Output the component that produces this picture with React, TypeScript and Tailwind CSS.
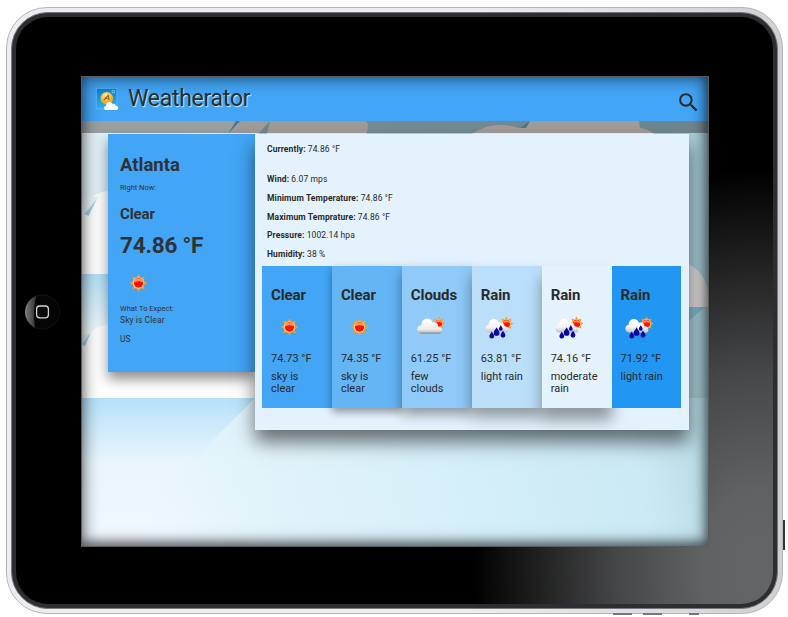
import React from "react";
import { MdSearch } from "react-icons/md";

const rays = [0, 45, 90, 135, 180, 225, 270, 315];

function SunShape({ x, y, s = 1 }: { x: number; y: number; s?: number }) {
  return (
    <g transform={`translate(${x} ${y}) scale(${s})`}>
      {rays.map((a) => (
        <path key={a} d="M-2.4 -4.6 L0 -8.8 L2.4 -4.6Z" fill="#f9a01b" transform={`rotate(${a})`} />
      ))}
      <circle r="5.5" fill="#fbd9a0" />
      <circle r="4.7" fill="#ff1200" />
      <path d="M-4.6 -.6A4.7 4.7 0 0 1 4.6 -.6Q0 -2.8 -4.6 -.6Z" fill="#ffb27a" opacity=".85" />
    </g>
  );
}

function CloudShape({ dy = 0 }: { dy?: number }) {
  return (
    <g transform={`translate(0 ${dy})`}>
      <path d="M11 28.5C5 28.5 4.5 20.5 10.5 20C10.5 12.5 20 11.5 21.5 17.5C26 16.5 27.5 20 27 21.5C32 21.5 32.5 28.5 28.5 28.5Z" fill="url(#cloudFill)" />
    </g>
  );
}

function WeatherIcon({ kind }: { kind: string }) {
  return (
    <svg className="mb-px block h-[46px] w-[42px]" viewBox="0 0 42 46">
      <defs>
        <linearGradient id="cloudFill" x1="0" y1="0" x2="0" y2="1">
          <stop offset="0" stopColor="#fff" />
          <stop offset=".72" stopColor="#ececec" />
          <stop offset=".9" stopColor="#c4c4c4" />
          <stop offset="1" stopColor="#777" />
        </linearGradient>
        <linearGradient id="rainCloudFill" x1="0" y1="0" x2="0" y2="1">
          <stop offset="0" stopColor="#fff" />
          <stop offset=".6" stopColor="#f4f4f4" />
          <stop offset="1" stopColor="#bdbdc2" />
        </linearGradient>
      </defs>
      {kind === "sun" && <SunShape x={18.5} y={22} />}
      {kind === "cloud" && (
        <>
          <SunShape x={27.7} y={18.3} s={0.75} />
          <CloudShape />
        </>
      )}
      {kind === "rain" && (
        <>
          <SunShape x={25.5} y={18.6} s={0.8} />
          <path d="M7.5 27.5C3.5 26.5 3.2 20.5 7.6 19.8C7.6 13 16.5 12 17.6 17.5C22.6 16.8 23.6 19.6 23.5 21.2C28.5 21.4 28.6 27.3 25 27.8Z" fill="url(#rainCloudFill)" />
          {[
            [10.8, 30.2, 1.05],
            [15.6, 26.8, 1.25],
            [19.8, 23.2, 0.8],
            [22, 29.4, 1.05],
          ].map(([x, y, s]) => (
            <path key={x} d="M0 -3.6C1 -1.5 2.3 -.6 2.3 .9A2.3 2.3 0 0 1 -2.3 .9C-2.3 -.6 -1 -1.5 0 -3.6Z" fill="#0808a0" transform={`translate(${x} ${y}) scale(${s})`} />
          ))}
        </>
      )}
    </svg>
  );
}

function Logo() {
  return (
    <svg className="block h-6 w-6 shrink-0" viewBox="0 0 24 24">
      <defs>
        <linearGradient id="logoBg" x1="0" y1="0" x2="0" y2="1">
          <stop offset="0" stopColor="#0a7fd6" />
          <stop offset="1" stopColor="#35b0f2" />
        </linearGradient>
        <radialGradient id="logoSun" cx=".45" cy=".3">
          <stop offset="0" stopColor="#fff3a6" />
          <stop offset="1" stopColor="#f6b21c" />
        </radialGradient>
      </defs>
      <rect x="1.3" y="1.3" width="20.6" height="20.6" fill="url(#logoBg)" stroke="#5dbdf5" strokeWidth=".8" />
      <circle cx="11.8" cy="11.2" r="6.2" fill="url(#logoSun)" />
      <path d="M8.6 13.4L13.2 8.4L14 12.8M10 11L13.8 12" stroke="#a9621f" strokeWidth="1.2" fill="none" />
      <circle cx="18.4" cy="4.6" r="1.4" fill="none" stroke="#a9dcfa" strokeWidth=".8" />
      <path d="M11 22.9C8.2 22.8 8.1 19.2 11 18.9C11 15.4 15.4 13.2 17.6 17C19.8 16.4 20.6 17.8 20.5 18.8C24 19.2 23.8 22.9 21.2 22.9Z" fill="#fff" />
    </svg>
  );
}

function Sky() {
  return (
    <svg className="absolute inset-0 h-full w-full" viewBox="82 77 626 469" preserveAspectRatio="none">
      <defs>
        <linearGradient id="base" x1="0" y1="0" x2="1" y2="0">
          <stop offset="0" stopColor="#e4f2f8" />
          <stop offset=".3" stopColor="#b5d9e4" />
          <stop offset="1" stopColor="#a9ced9" />
        </linearGradient>
        <linearGradient id="strip" x1="0" y1="0" x2="0" y2="1">
          <stop offset="0" stopColor="#b3e0f6" />
          <stop offset="1" stopColor="#f4f9fc" />
        </linearGradient>
        <linearGradient id="low" x1="0" y1="0" x2="0" y2="1">
          <stop offset="0" stopColor="#b5e1f8" />
          <stop offset=".42" stopColor="#e9f5fc" />
          <stop offset="1" stopColor="#eff8fe" />
        </linearGradient>
        <linearGradient id="beam" gradientUnits="userSpaceOnUse" x1="140" y1="500" x2="710" y2="400">
          <stop offset="0" stopColor="#e9f6fd" stopOpacity="0" />
          <stop offset=".12" stopColor="#e4f4fb" stopOpacity=".7" />
          <stop offset=".24" stopColor="#e1f3fa" />
          <stop offset=".6" stopColor="#d3eef8" />
          <stop offset=".85" stopColor="#cbeaf5" />
          <stop offset="1" stopColor="#b8dbe5" />
        </linearGradient>
        <linearGradient id="fade" x1="0" y1="0" x2="0" y2="1">
          <stop offset="0" stopColor="#dceffb" stopOpacity="0" />
          <stop offset="1" stopColor="#dceffb" stopOpacity=".7" />
        </linearGradient>
      </defs>
      <rect x="82" y="77" width="626" height="330" fill="url(#base)" />
      <path d="M82 205Q98 188 130 188V274H82Z" fill="#fff" />
      <path d="M82 198L100 196L84 215Z" fill="#e8f4f9" />
      <path d="M84.5 214L97 199L88.5 216Z" fill="#9fd2e9" />
      <rect x="82" y="274" width="180" height="60" fill="url(#strip)" />
      <path d="M82 346Q90 325 112 324H270V398H82Z" fill="#fff" />
      <path d="M82 344L91 332L85 346Z" fill="#9fd2e9" />
      <rect x="82" y="398" width="626" height="149" fill="url(#low)" />
      <path d="M255 398L204 449L82 547H708V398Z" fill="url(#beam)" />
      <path d="M340 449V547H708V449Z" fill="url(#beam)" opacity="0" />
      <path d="M82 121H240L231 134H82Z" fill="#edf4f5" />
      <path d="M185 134Q202 128 220 134Z" fill="#fff0e9" />
      <path d="M231 134Q235 124 240 121H366Q370 126 366 134Z" fill="#f5eeea" />
      <path d="M228 134L240 121H236Z" fill="#72b8d2" />
      <path d="M258 134L270 121L267 134Z" fill="#a9cfdc" />
      <path d="M472 134Q485 125 500 125Q512 125 518 128Q527 128 530 121H639L640 128Q648 129 654 134Z" fill="#f8f0ed" />
      <path d="M520 128L530 121L526 128Z" fill="#6cb5d4" />
      <path d="M688 264Q705 272 708 292V307H688Z" fill="#e1dfe0" />
      <path d="M688 307H705L690 320H688Z" fill="#83bdd2" />
    </svg>
  );
}

const days = [
  { t: "Clear", k: "sun", v: "74.73 °F", d: "sky is clear", c: "bg-[#42a5f5] z-0" },
  { t: "Clear", k: "sun", v: "74.35 °F", d: "sky is clear", c: "bg-[#64b5f6] z-10 shadow-[0_4px_8px_rgba(0,0,0,0.38)]" },
  { t: "Clouds", k: "cloud", v: "61.25 °F", d: "few clouds", c: "bg-[#90caf9] z-20 shadow-[0_6px_12px_rgba(0,0,0,0.4)]" },
  { t: "Rain", k: "rain", v: "63.81 °F", d: "light rain", c: "bg-[#bbdefb] z-30 shadow-[0_9px_14px_rgba(0,0,0,0.38)]" },
  { t: "Rain", k: "rain", v: "74.16 °F", d: "moderate rain", c: "bg-[#e3f2fd] z-40 shadow-[0_12px_14px_rgba(0,0,0,0.38)]" },
  { t: "Rain", k: "rain", v: "71.92 °F", d: "light rain", c: "bg-[#2196f3] z-50" },
];

const details = [
  ["Wind:", "6.07 mps"],
  ["Minimum Temperature:", "74.86 °F"],
  ["Maximum Temprature:", "74.86 °F"],
  ["Pressure:", "1002.14 hpa"],
  ["Humidity:", "38 %"],
];

function Header() {
  return (
    <header className="relative flex h-11 items-start bg-[#42a5f5] pl-[13px] pr-[7px]">
      <div className="pt-[10px]">
        <Logo />
      </div>
      <h1 className="ml-[9px] pt-[6px] text-[23px] leading-[32px] tracking-[-0.27px] text-[#2d2d2d] [text-shadow:1px_1px_1px_rgba(255,255,255,0.75)]">
        Weatherator
      </h1>
      <MdSearch className="ml-auto mt-[13px] h-[25px] w-[25px] text-[#2b2b2b]" />
    </header>
  );
}

function CityCard() {
  return (
    <section className="h-[238px] w-[147px] bg-[#42a5f5] pl-3 pt-[19px] text-[#2f3336] shadow-[0_7px_12px_rgba(0,0,0,0.45)]">
      <h2 className="text-[18.5px] font-bold leading-6">Atlanta</h2>
      <p className="mt-1.5 text-[7.5px] leading-[10px]">Right Now:</p>
      <h3 className="mt-[11px] text-[15px] font-bold leading-5 tracking-[-0.1px]">Clear</h3>
      <p className="mt-[7px] text-[22.5px] font-bold leading-7 tracking-[-0.2px]">74.86 °F</p>
      <svg className="mt-[15px] ml-[10px] block h-[18px] w-[17px] overflow-visible" viewBox="0 0 17 17">
        <SunShape x={8.5} y={8.5} />
      </svg>
      <p className="mt-[11px] text-[7.5px] leading-[11px]">What To Expect:</p>
      <p className="text-[8.5px] leading-3 tracking-[0.08px]">Sky is Clear</p>
      <p className="mt-[7px] text-[8.5px] leading-3">US</p>
    </section>
  );
}

function DetailCard() {
  return (
    <section className="relative h-[296px] w-[434px] bg-[#e3f2fd] pl-[7px] pt-[5.5px] text-[8.5px] text-[#2a2a2a] shadow-[0_12px_18px_rgba(0,0,0,0.55)]">
      <div className="pl-[5px] leading-[18.6px] tracking-[0.1px]">
        <p>
          <b>Currently:</b> 74.86 °F
        </p>
        <div className="mt-[12.4px]">
          {details.map(([k, v]) => (
            <p key={k}>
              <b>{k}</b> {v}
            </p>
          ))}
        </div>
      </div>
      <div className="isolate mt-[2.5px] grid h-[142.5px] w-[419.5px] grid-cols-6">
        {days.map((d, i) => (
          <article key={i} className={`relative pl-[9px] pr-[9px] pt-[19px] ${d.c}`}>
            <h4 className="text-[15px] font-bold leading-5 tracking-[-0.1px]">{d.t}</h4>
            <WeatherIcon kind={d.k} />
            <p className="text-[11px] leading-[14px]">{d.v}</p>
            <p className="mt-[5px] text-[11px] leading-3">{d.d}</p>
          </article>
        ))}
      </div>
    </section>
  );
}

function HomeButton() {
  return (
    <svg className="ml-[8px] mt-[2px] h-9 w-9" viewBox="0 0 36 36">
      <defs>
        <linearGradient id="gloss" x1="0" x2="1">
          <stop offset="0" stopColor="#808080" />
          <stop offset="1" stopColor="#2c2c2c" />
        </linearGradient>
      </defs>
      <circle cx="18.4" cy="18" r="17" fill="#050505" stroke="#1b1b1b" strokeWidth=".7" />
      <path d="M12.5 1.8Q8 17 11 33.7A17.2 17.2 0 0 1 12.5 1.8Z" fill="url(#gloss)" />
      <rect x="12.6" y="12" width="11.8" height="11.8" rx="3" fill="#080808" stroke="#d2d2d2" strokeWidth="1.3" />
    </svg>
  );
}

export default function App() {
  return (
    <div className="relative h-[617px] w-[788px] overflow-hidden bg-white pl-[6px] pt-[7px] font-['Roboto',sans-serif]">
      <div className="absolute left-[783px] top-[520px] h-[30px] w-[2px] bg-[#35363a]" />
      <div className="absolute left-[613px] top-[613px] h-[2px] w-[19px] bg-[#77777b]" />
      <div className="absolute left-[643px] top-[613px] h-[2px] w-[19px] bg-[#77777b]" />
      <div className="absolute left-[689px] top-[613px] h-[2px] w-[10px] bg-[#77777b]" />
      <div className="h-[607px] w-[777px] rounded-[41px] border border-[#b4b4ba] bg-[linear-gradient(90deg,#ededf0_60%,#d0d0d3)] p-[4px]">
        <div className="h-full rounded-[37px] border border-[#77777b] bg-[#2c2e31] p-[4px]">
          <div className="relative flex h-full items-start rounded-[32px] bg-[radial-gradient(ellipse_285px_400px_at_98%_94%,#646567_0%,#606163_20%,#454648_50%,#1c1c1c_80%,#000_100%)]">
            <div className="flex h-full w-[66px] shrink-0 items-center">
              <HomeButton />
            </div>
            <main className="relative isolate mt-[60px] h-[469px] w-[626px] overflow-hidden outline outline-1 outline-[#5b5c5f]">
              <Sky />
              <Header />
              <div className="relative h-3 bg-[#000]/35" />
              <div className="relative flex items-start pl-[26px] pt-px">
                <CityCard />
                <DetailCard />
              </div>
              <div className="pointer-events-none absolute inset-0 shadow-[inset_0_0_16px_2px_rgba(0,0,0,0.5),inset_-2px_-4px_10px_rgba(0,0,0,0.35)]" />
            </main>
          </div>
        </div>
      </div>
    </div>
  );
}
